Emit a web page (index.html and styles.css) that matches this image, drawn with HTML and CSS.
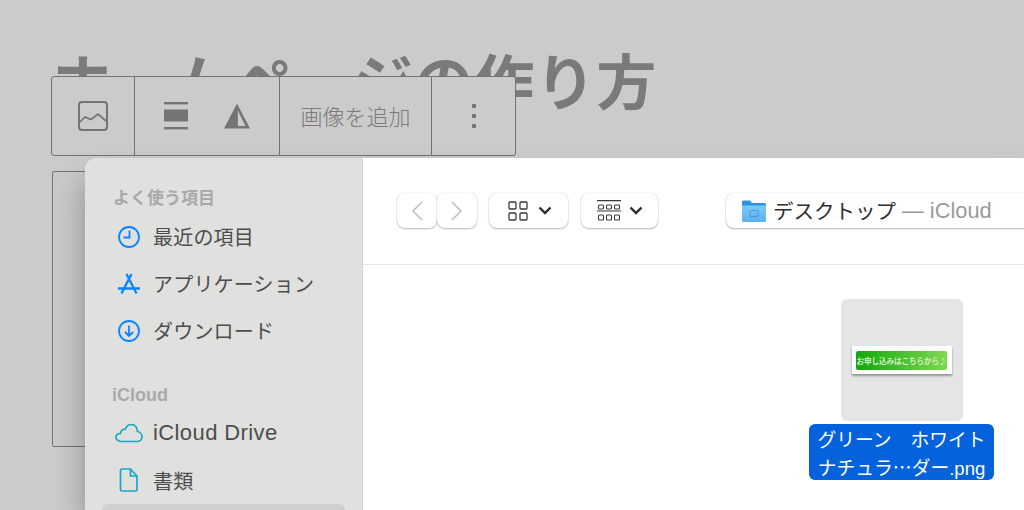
FILE: index.html
```html
<!DOCTYPE html>
<html lang="ja">
<head>
<meta charset="utf-8">
<title>ホームページの作り方</title>
<link rel="stylesheet" href="styles.css">
</head>
<body>
<main class="page">
  <h1 class="title">ホームページの作り方</h1>
  <div class="placeholder"></div>
</main>
<div class="toolbar">
  <div class="tb-group tb-icon">
    <svg width="32" height="32" viewBox="0 0 32 32" fill="none" stroke="#747474" stroke-width="2"><rect x="2" y="2" width="28" height="28" rx="3"/><path d="M3 22L8 17l6 2.500L21 14l8 7" stroke-width="1.700"/></svg>
  </div>
  <div class="tb-group tb-align">
    <svg width="24" height="28" viewBox="0 0 24 28" fill="#747474"><rect y="0" width="24" height="2.400"/><rect y="7.500" width="24" height="12"/><rect y="25" width="24" height="2.400"/></svg>
    <svg width="26" height="26" viewBox="0 0 26 26"><path d="M13 0.500L26 25.500H0Z" fill="#747474"/><path d="M13.800 7.500L21.500 23H13.800Z" fill="#cbcbcb"/></svg>
  </div>
  <div class="tb-group tb-text">画像を追加</div>
  <div class="tb-group tb-more"><span class="dot"></span><span class="dot"></span><span class="dot"></span></div>
</div>
<section class="dialog">
  <aside class="sidebar">
    <h2 class="side-head">よく使う項目</h2>
    <ul class="side-list">
      <li class="side-item">
        <svg class="side-icon" width="24" height="24" viewBox="0 0 24 24" fill="none" stroke="#0a84ff" stroke-width="1.800"><circle cx="12" cy="12" r="10"/><path d="M12.500 5.500V12.500H6.500"/></svg>
        最近の項目</li>
      <li class="side-item">
        <svg class="side-icon" width="26" height="24" viewBox="0 0 26 24" fill="none" stroke="#0a84ff" stroke-width="2.300"><path d="M10.500 2L20.500 21.500M15.500 2L5.500 21.500M2 16.500H24"/></svg>
        アプリケーション</li>
      <li class="side-item">
        <svg class="side-icon" width="24" height="24" viewBox="0 0 24 24" fill="none" stroke="#0a84ff" stroke-width="1.800"><circle cx="12" cy="12" r="10"/><path d="M12 6.500V17M8 13l4 4 4-4"/></svg>
        ダウンロード</li>
    </ul>
    <h2 class="side-head side-head-second">iCloud</h2>
    <ul class="side-list">
      <li class="side-item side-item-latin">
        <svg class="side-icon" width="28" height="20" viewBox="0 0 28 20" fill="none" stroke="#14a8c4" stroke-width="1.700"><path d="M6 18.500C3 18.500 1 16.500 1 14.300 1 12 3 10.500 5.500 10.500 6 7.500 8 6 10 6.300 11.500 3 14 1.500 16.500 1.500 20 1.500 22.500 4.500 22.500 8.500 25 9 27 11.500 27 14 27 16.500 25 18.500 22 18.500Z"/></svg>
        iCloud Drive</li>
      <li class="side-item side-item-tall">
        <svg class="side-icon" width="20" height="24" viewBox="0 0 20 24" fill="none" stroke="#14a8c4" stroke-width="1.700"><path d="M3 1H11.500L18 8V21.500A1.500 1.500 0 0 1 16.500 23H3A1.500 1.500 0 0 1 1.500 21.500V2.500A1.500 1.500 0 0 1 3 1ZM11.500 1V8H18"/></svg>
        書類</li>
      <li class="side-item side-selected"></li>
    </ul>
  </aside>
  <div class="browser">
    <header class="browser-bar">
      <div class="nav-pair">
        <button class="btn nav-btn"><svg width="12" height="20" viewBox="0 0 12 20" fill="none" stroke="#bdbdbd" stroke-width="1.500"><path d="M11 1L2 10l9 9"/></svg></button>
        <button class="btn nav-btn"><svg width="12" height="20" viewBox="0 0 12 20" fill="none" stroke="#bdbdbd" stroke-width="1.500"><path d="M1 1l9 9-9 9"/></svg></button>
      </div>
      <button class="btn view-btn">
        <svg width="20" height="20" viewBox="0 0 20 20" fill="none" stroke="#3a3a3a" stroke-width="1.300"><rect x="1" y="1" width="7" height="7" rx="1"/><rect x="12" y="1" width="7" height="7" rx="1"/><rect x="1" y="12" width="7" height="7" rx="1"/><rect x="12" y="12" width="7" height="7" rx="1"/></svg>
        <svg class="chev" width="14" height="9" viewBox="0 0 14 9" fill="none" stroke="#2a2a2a" stroke-width="2.400"><path d="M1.500 1.500L7 7l5.500-5.500"/></svg>
      </button>
      <button class="btn group-btn">
        <svg width="24" height="22" viewBox="0 0 24 22" fill="none" stroke="#3a3a3a" stroke-width="1.100"><path d="M0 .7H24M0 11H24" stroke-width="1.200"/><rect x="1.500" y="5" width="5" height="4" rx="1"/><rect x="9.500" y="5" width="5" height="4" rx="1"/><rect x="17.500" y="5" width="5" height="4" rx="1"/><rect x="1.500" y="15" width="5" height="5" rx="1"/><rect x="9.500" y="15" width="5" height="5" rx="1"/><rect x="17.500" y="15" width="5" height="5" rx="1"/></svg>
        <svg class="chev" width="14" height="9" viewBox="0 0 14 9" fill="none" stroke="#2a2a2a" stroke-width="2.400"><path d="M1.500 1.500L7 7l5.500-5.500"/></svg>
      </button>
      <button class="btn path-btn">
        <svg width="26" height="24" viewBox="0 0 26 24"><defs><linearGradient id="folderFill" x1="0" y1="0" x2="0" y2="1"><stop offset="0" stop-color="#7cc8f8"/><stop offset="1" stop-color="#5cb2ee"/></linearGradient></defs><path d="M1 3a1.500 1.500 0 0 1 1.500-1.500h6.500l2 2.500h12.500a1.500 1.500 0 0 1 1.500 1.500V7H1Z" fill="#2f93e0"/><path d="M1 6.500H25V21.500a1.500 1.500 0 0 1-1.500 1.500H2.500A1.500 1.500 0 0 1 1 21.500Z" fill="url(#folderFill)"/><rect x="9" y="11.500" width="8" height="6" rx="1" fill="none" stroke="#4d9fdc" stroke-width="1.200"/></svg>
        <span class="path-name">デスクトップ</span><span class="path-loc">— iCloud</span>
      </button>
    </header>
    <div class="files">
      <figure class="file">
        <div class="thumb">
          <div class="thumb-card"><div class="thumb-btn">お申し込みはこちらから♪</div></div>
        </div>
        <figcaption class="file-name">グリーン　ホワイト<br>ナチュラ…ダー<span class="ext">.png</span></figcaption>
      </figure>
    </div>
  </div>
</section>
</body>
</html>
```
FILE: styles.css
```css
html, body { margin: 0; padding: 0; }
body {
  width: 1024px;
  height: 510px;
  overflow: hidden;
  position: relative;
  background: #cbcbcb;
  font-family: "Noto Sans CJK JP", "Noto Sans", sans-serif;
}
.page { padding: 39px 0 0 52px; }
.title {
  margin: 0;
  font-size: 60px;
  line-height: 80px;
  font-weight: 700;
  letter-spacing: .8px;
  color: #7a7a7a;
  white-space: nowrap;
}
.placeholder {
  margin-top: 52px;
  width: 60px;
  height: 276px;
  border: 1.500px solid #727272;
  border-radius: 2px;
  background: #c9c9c9;
  box-sizing: border-box;
}
.toolbar {
  position: absolute;
  left: 51px;
  top: 76px;
  height: 80px;
  width: 465px;
  display: flex;
  box-sizing: border-box;
  border: 1.500px solid #737373;
  border-radius: 3px;
  background: #cbcbcb;
}
.tb-group {
  display: flex;
  align-items: center;
  justify-content: center;
  box-sizing: border-box;
  border-right: 1.500px solid #737373;
}
.tb-icon { width: 83px; }
.tb-align { width: 145px; gap: 36px; }
.tb-text { width: 152px; font-size: 22px; color: #7b7b7b; font-weight: 300; padding-bottom: 2px; }
.tb-more { flex: 1; border-right: 0; flex-direction: column; gap: 6px; }
.dot { width: 4px; height: 4px; border-radius: 1px; background: #737373; }
.dialog {
  position: absolute;
  left: 85px;
  top: 158px;
  width: 939px;
  height: 352px;
  display: flex;
  border-top-left-radius: 12px;
  overflow: hidden;
  background: #fff;
  box-shadow: 0 20px 30px rgba(0,0,0,.3);
}
.sidebar {
  width: 278px;
  flex: none;
  background: #e0e0de;
  border-right: 1px solid #d4d4d4;
  box-sizing: border-box;
  padding: 28px 17px 0;
}
.side-head {
  margin: 0 0 5px 11px;
  font-size: 17px;
  line-height: 22px;
  font-weight: 700;
  color: #a9a9a9;
}
.side-head-second {
  margin: 30px 0 3px 10px;
  font-size: 18px;
  font-family: "Liberation Sans", sans-serif;
}
.side-list { list-style: none; margin: 0; padding: 0; }
.side-item {
  height: 47px;
  display: flex;
  align-items: center;
  font-size: 20px;
  letter-spacing: .2px;
  color: #4d4d4d;
  position: relative;
  padding-left: 51px;
  box-sizing: border-box;
}
.side-item-latin { font-family: "Liberation Sans", sans-serif; font-size: 22px; letter-spacing: .4px; }
.side-item-tall { height: 48px; }
.side-icon { position: absolute; left: 26.500px; top: 50%; transform: translate(-50%, -50%); }
.side-selected { background: #cfcfcd; border-radius: 6px; }
.browser { flex: 1; display: flex; flex-direction: column; }
.browser-bar {
  height: 107px;
  flex: none;
  box-sizing: border-box;
  border-bottom: 1px solid #e3e3e3;
  display: flex;
  align-items: flex-start;
  padding: 35px 0 0 34px;
  gap: 12px;
}
.btn {
  height: 35px;
  padding: 0;
  border: 0;
  border-radius: 8px;
  background: #fff;
  box-shadow: 0 1px 2px rgba(0,0,0,.25), 0 0 1px rgba(0,0,0,.2);
  display: flex;
  align-items: center;
  justify-content: center;
  font-family: inherit;
}
.nav-pair { display: flex; gap: 0; }
.nav-btn { width: 40px; }
.view-btn { width: 79px; gap: 10px; padding-left: 2px; box-sizing: border-box; }
.group-btn { width: 77px; gap: 8px; padding-left: 1px; box-sizing: border-box; margin-left: 1px; }
.path-btn {
  width: 340px;
  margin-left: 56px;
  flex: none;
  justify-content: flex-start;
  padding-left: 15px;
  box-sizing: border-box;
  gap: 6px;
}
.path-name { color: #2e2e2e; font-size: 20.500px; white-space: nowrap; padding-bottom: 2px; }
.path-loc { color: #9a9a9a; font-family: "Liberation Sans", sans-serif; font-size: 21.800px; white-space: nowrap; }
.files { flex: 1; position: relative; }
.file {
  position: absolute;
  left: 446px;
  top: 34px;
  margin: 0;
  width: 185px;
  display: flex;
  flex-direction: column;
  align-items: center;
}
.thumb {
  width: 122px;
  height: 122px;
  border-radius: 6px;
  background: #e5e5e5;
  display: flex;
  align-items: center;
  justify-content: center;
}
.thumb-card {
  width: 100px;
  height: 28px;
  background: #fff;
  box-shadow: 0 2px 2px rgba(0,0,0,.35);
  display: flex;
  align-items: center;
  justify-content: center;
}
.thumb-btn {
  width: 91px;
  height: 19px;
  border-radius: 2px;
  background: linear-gradient(90deg, #12a80e, #7fd84f);
  color: #d8f0c8;
  font-size: 7.500px;
  font-weight: 700;
  line-height: 19px;
  text-align: center;
  white-space: nowrap;
}
.file-name {
  margin-top: 3px;
  width: 185px;
  height: 56px;
  padding-top: 1px;
  box-sizing: border-box;
  border-radius: 6px;
  background: #0462dc;
  color: #fff;
  font-size: 18.800px;
  line-height: 28px;
  text-align: center;
  white-space: nowrap;
}
.ext { font-family: "Liberation Sans", sans-serif; font-size: 18.500px; }
```
